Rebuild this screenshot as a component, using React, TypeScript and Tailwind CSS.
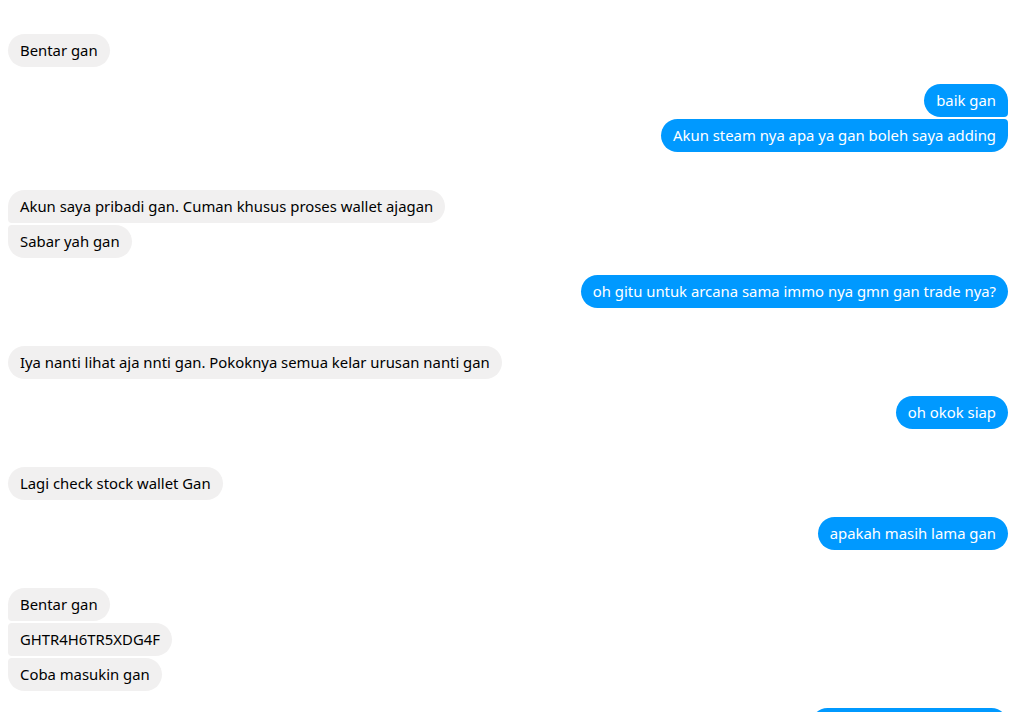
type Msg = { from: "me" | "them"; lines: string[] };

const thread: Msg[] = [
  { from: "them", lines: ["Bentar gan"] },
  { from: "me", lines: ["baik gan", "Akun steam nya apa ya gan boleh saya adding"] },
  { from: "them", lines: ["Akun saya pribadi gan. Cuman khusus proses wallet ajagan", "Sabar yah gan"] },
  { from: "me", lines: ["oh gitu untuk arcana sama immo nya gmn gan trade nya?"] },
  { from: "them", lines: ["Iya nanti lihat aja nnti gan. Pokoknya semua kelar urusan nanti gan"] },
  { from: "me", lines: ["oh okok siap"] },
  { from: "them", lines: ["Lagi check stock wallet Gan"] },
  { from: "me", lines: ["apakah masih lama gan"] },
  { from: "them", lines: ["Bentar gan", "GHTR4H6TR5XDG4F", "Coba masukin gan"] },
  { from: "me", lines: ["oke gan sudah masuk ya"] },
];

function corners(mine: boolean, i: number, n: number) {
  if (n === 1) return "rounded-[17px]";
  const first = i === 0;
  const last = i === n - 1;
  if (mine) {
    if (first) return "rounded-[17px] rounded-br-[4px]";
    if (last) return "rounded-[17px] rounded-tr-[4px]";
    return "rounded-[17px] rounded-r-[4px]";
  }
  if (first) return "rounded-[17px] rounded-bl-[4px]";
  if (last) return "rounded-[17px] rounded-tl-[4px]";
  return "rounded-[17px] rounded-l-[4px]";
}

export default function App() {
  return (
    <div
      className="h-[712px] w-full overflow-hidden bg-white pl-2 pr-[5px] pt-[34px] text-[14.87px]"
      style={{ fontFamily: '"Segoe UI", "Noto Sans", "Open Sans", sans-serif' }}
    >
      {thread.map((msg, g) => {
        const mine = msg.from === "me";
        return (
          <div
            key={g}
            className={
              (g === 0 ? "" : mine ? "mt-[17px] " : "mt-[38px] ") +
              (mine ? "flex flex-col items-end gap-[2px]" : "flex flex-col items-start gap-[2px]")
            }
          >
            {msg.lines.map((line, i) => (
              <div
                key={i}
                className={
                  "h-[33px] px-3 py-[6px] leading-[21px] whitespace-nowrap " +
                  (mine ? "bg-[#0099ff] text-white " : "bg-[#f1f0f0] text-black ") +
                  corners(mine, i, msg.lines.length)
                }
              >
                {line}
              </div>
            ))}
          </div>
        );
      })}
    </div>
  );
}
